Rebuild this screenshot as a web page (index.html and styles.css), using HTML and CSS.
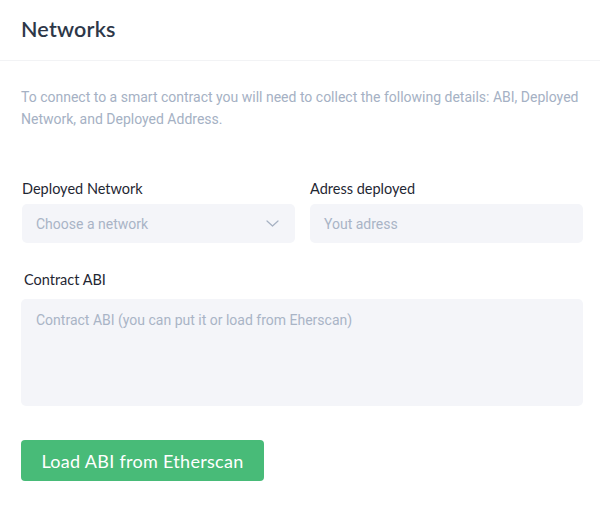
FILE: index.html
```html
<!DOCTYPE html>
<html lang="en">
<head>
<meta charset="utf-8">
<title>Networks</title>
<link rel="stylesheet" href="styles.css">
</head>
<body>
<div class="card">
  <header class="card-header">
    <h1 class="title">Networks</h1>
  </header>
  <section class="card-body">
    <p class="intro">To connect to a smart contract you will need to collect the following details: ABI, Deployed Network, and Deployed Address.</p>
    <div class="grid">
      <div class="field">
        <label class="label">Deployed Network</label>
        <div class="select">
          <span class="placeholder">Choose a network</span>
          <svg class="chevron" width="13" height="7" viewBox="0 0 13 7"><path d="M1 1 L6.5 6 L12 1" fill="none" stroke="#a6b1c2" stroke-width="1.2" stroke-linecap="round" stroke-linejoin="round"/></svg>
        </div>
      </div>
      <div class="field">
        <label class="label">Adress deployed</label>
        <div class="input"><span class="placeholder">Yout adress</span></div>
      </div>
    </div>
    <div class="field field-abi">
      <label class="label label-abi">Contract ABI</label>
      <div class="textarea"><span class="placeholder">Contract ABI (you can put it or load from Eherscan)</span></div>
    </div>
    <button class="btn">Load ABI from Etherscan</button>
  </section>
</div>
</body>
</html>
```

FILE: styles.css
```css
* { box-sizing: border-box; }
html, body { margin: 0; padding: 0; background: #ffffff; }
body { font-family: Lato, "Noto Sans", sans-serif; }

.card-header {
  height: 61px;
  border-bottom: 1px solid #f2f3f5;
  padding: 0 21px;
  display: flex;
  align-items: center;
}
.title {
  margin: 0;
  font-family: Lato, "Noto Sans", sans-serif;
  font-weight: 600;
  font-size: 21.5px;
  color: #2d3748;
  letter-spacing: 0.2px;
  padding-bottom: 3px;
}

.card-body { padding: 25px 17px 0 21px; }

.intro {
  margin: 0;
  font-family: Roboto, sans-serif;
  font-size: 14px;
  line-height: 22px;
  color: #a5b1c4;
}

.grid {
  margin-top: 49px;
  margin-left: 1px;
  display: grid;
  grid-template-columns: 273px 273px;
  column-gap: 15px;
}

.field { display: flex; flex-direction: column; }

.label {
  font-family: Lato, "Noto Sans", sans-serif;
  font-size: 14.5px;
  line-height: 20px;
  color: #1f2733;
  margin-bottom: 5px;
}

.select, .input {
  height: 39px;
  background: #f4f5f9;
  border-radius: 5px;
  display: flex;
  align-items: center;
  justify-content: space-between;
  padding: 0 16px 0 14px;
}

.placeholder {
  font-family: Roboto, sans-serif;
  font-size: 14px;
  color: #a9b4c6;
}

.chevron { display: block; }

.field-abi { margin-top: 27px; }
.label-abi { margin-left: 3px; margin-bottom: 9px; }

.textarea {
  height: 107px;
  background: #f4f5f9;
  border-radius: 5px;
  padding: 10px 15px;
  line-height: 20px;
}

.btn {
  margin-top: 34px;
  height: 41px;
  width: 243px;
  border: none;
  border-radius: 4px;
  background: #48bb78;
  color: #ffffff;
  font-family: Lato, "Noto Sans", sans-serif;
  font-size: 18px;
  padding: 0;
  letter-spacing: 0.3px;
}
```
